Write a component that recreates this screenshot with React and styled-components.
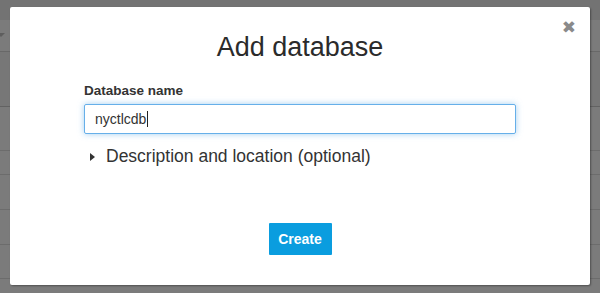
import React from "react";
import styled, { createGlobalStyle } from "styled-components";

const GlobalStyle = createGlobalStyle`
  html, body { margin: 0; padding: 0; }
  body {
    width: 600px;
    height: 293px;
    overflow: hidden;
    font-family: "Liberation Sans", Arial, sans-serif;
    background: #7a7a7a;
  }
`;

/* page behind the overlay */
const Page = styled.div`
  position: relative;
  width: 600px;
  height: 293px;
  background: #7b7b7b;
  overflow: hidden;
`;

const BgTable = styled.div`
  display: flex;
  flex-direction: column;
`;

const BgRow = styled.div`
  height: ${(p) => p.h}px;
  box-sizing: border-box;
  border-bottom: 1px solid ${(p) => p.line || "#6c6c6c"};
  background: ${(p) => p.bg || "transparent"};
  position: relative;
`;

const Chevron = styled.span`
  position: absolute;
  left: -3px;
  top: 13px;
  width: 0;
  height: 0;
  border-left: 4px solid transparent;
  border-right: 4px solid transparent;
  border-top: 4px solid #5e5e5e;
`;

const Overlay = styled.div`
  position: absolute;
  inset: 0;
  padding: 7px 10px 8px 10px;
  box-sizing: border-box;
  display: flex;
`;

const Modal = styled.div`
  flex: 1;
  position: relative;
  background: #fff;
  border-radius: 2px;
  box-shadow: 1px 1px 2px rgba(0, 0, 0, 0.35);
  display: flex;
  flex-direction: column;
  align-items: center;
  padding: 24px 74px 0 74px;
`;

const Close = styled.button`
  position: absolute;
  top: 12px;
  right: 14px;
  border: none;
  background: transparent;
  padding: 0;
  color: #8a8a8a;
  font: bold 17px "DejaVu Sans", sans-serif;
  line-height: 1;
  cursor: pointer;
`;

const Title = styled.h1`
  margin: 0;
  font-size: 27px;
  font-weight: 400;
  color: #2b2b2b;
  line-height: 32px;
`;

const Form = styled.div`
  align-self: stretch;
  display: flex;
  flex-direction: column;
  margin-top: 20px;
`;

const Label = styled.label`
  font-size: 13.5px;
  font-weight: 700;
  color: #333;
  margin-bottom: 6px;
`;

const InputBox = styled.div`
  height: 30px;
  box-sizing: border-box;
  border: 1px solid #66afe9;
  border-radius: 2px;
  box-shadow: 0 0 6px rgba(102, 175, 233, 0.6);
  display: flex;
  align-items: center;
  padding-left: 10px;
  font-size: 14px;
  color: #333;
`;

const Caret = styled.span`
  display: inline-block;
  width: 1px;
  height: 16px;
  background: #222;
  margin-left: 1px;
`;

const Toggle = styled.div`
  display: flex;
  align-items: center;
  gap: 11px;
  margin-top: 12px;
  padding-left: 6px;
  font-size: 17.5px;
  color: #333;
`;

const Arrow = styled.span`
  width: 0;
  height: 0;
  border-top: 4px solid transparent;
  border-bottom: 4px solid transparent;
  border-left: 5px solid #333;
`;

const Create = styled.button`
  margin-top: 56px;
  width: 63px;
  height: 32px;
  border: none;
  border-radius: 1px;
  background: #0a9ddf;
  color: #fff;
  font: 700 14px "Liberation Sans", Arial, sans-serif;
  cursor: pointer;
`;

export default function App() {
  return (
    <>
      <GlobalStyle />
      <Page>
        <BgTable>
          <BgRow h={20} bg="#737373" line="#737373" />
          <BgRow h={32} line="#686868">
            <Chevron />
          </BgRow>
          <BgRow h={55} bg="#777" line="#626262" />
          <BgRow h={44} />
          <BgRow h={24} />
          <BgRow h={35} />
          <BgRow h={35} />
          <BgRow h={34} />
        </BgTable>
        <Overlay>
          <Modal>
            <Close aria-label="Close">✖</Close>
            <Title>Add database</Title>
            <Form>
              <Label>Database name</Label>
              <InputBox>
                nyctlcdb
                <Caret />
              </InputBox>
              <Toggle>
                <Arrow />
                Description and location (optional)
              </Toggle>
            </Form>
            <Create>Create</Create>
          </Modal>
        </Overlay>
      </Page>
    </>
  );
}
